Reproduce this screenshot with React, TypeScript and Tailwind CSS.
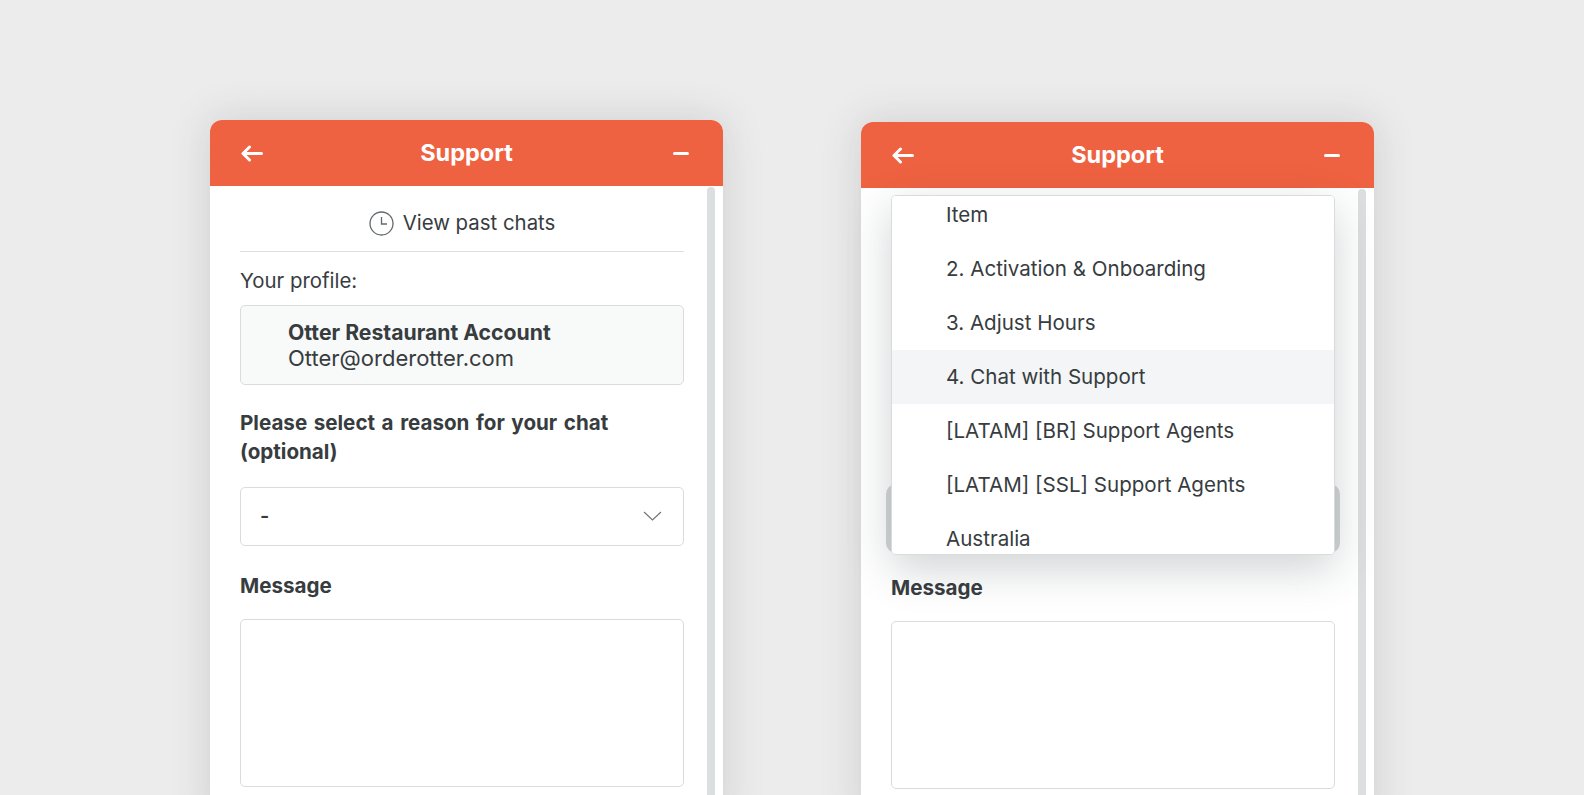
const options = [
  { label: 'Item' },
  { label: '2. Activation & Onboarding' },
  { label: '3. Adjust Hours' },
  { label: '4. Chat with Support', active: true },
  { label: '[LATAM] [BR] Support Agents' },
  { label: '[LATAM] [SSL] Support Agents' },
  { label: 'Australia' },
];

function ReasonMenu() {
  return (
    <div className="absolute left-[30px] top-[73px] z-10 h-[360px] w-[444px] overflow-hidden rounded-[5px] border border-[#d9dcdd] bg-white shadow-[0_14px_44px_rgba(60,70,75,0.24)]">
      <div className="-mt-[8px]">
        {options.map((option) => (
          <div
            key={option.label}
            className={`flex h-[54px] items-center pl-[54px] text-[20.55px] ${option.active ? 'bg-[#f3f5f6]' : 'bg-white'}`}
          >
            {option.label}
          </div>
        ))}
      </div>
    </div>
  );
}

function SupportPanel({ menuOpen = false, className = '' }: { menuOpen?: boolean; className?: string }) {
  return (
    <section className={`relative w-[513px] shrink-0 self-start rounded-t-[12px] bg-white text-[#373c3f] shadow-[0_0_40px_rgba(60,60,60,0.17)] ${className}`}>
      <header className="flex h-[66px] items-center justify-between rounded-t-[12px] bg-[#ef6241] pl-[31px] pr-[34px] text-white">
        <svg width="22" height="17" viewBox="0 0 22 17" fill="none" stroke="currentColor" strokeWidth="3" strokeLinecap="round" strokeLinejoin="round">
          <path d="M20.5 8.5H2M8.5 2 2 8.5 8.5 15" />
        </svg>
        <h2 className="mr-[3px] text-[23.5px] font-bold leading-none">Support</h2>
        <div className="h-[3px] w-[16px] rounded-full bg-white" />
      </header>

      <div className="flex pl-[30px]">
        <div className="w-[444px] shrink-0">
          {/* covered by the open menu on the right panel */}
          <div className={menuOpen ? 'invisible' : ''}>
            <div className="flex h-[66px] items-center justify-center gap-[9px] border-b border-[#dcdedf] pt-[9px] text-[20.4px]">
              <svg width="25" height="25" viewBox="0 0 25 25" fill="none" stroke="#63696c" strokeWidth="1.3">
                <circle cx="12.5" cy="12.5" r="11.5" />
                <path d="M12.5 6v7h5.5" />
              </svg>
              <span>View past chats</span>
            </div>

            <p className="mt-[15px] text-[20.4px] leading-[28px]">Your profile:</p>
            <div className="mt-[10px] flex h-[80px] flex-col justify-center rounded-[5px] border border-[#d9dcdd] bg-[#f8f9f9] pl-[47px] leading-[26px]">
              <span className="text-[21.2px] font-bold">Otter Restaurant Account</span>
              <span className="text-[22px]">Otter@orderotter.com</span>
            </div>

            <p className="mt-[24px] text-[20.6px] font-bold leading-[28.5px] [word-spacing:1.7px]">
              Please select a reason for your chat
              <br />
              (optional)
            </p>
          </div>

          <div className={`mt-[21px] flex h-[59px] items-center justify-between rounded-[5px] border border-[#d9dcdd] bg-white pb-[2px] pl-[19px] pr-[21px] text-[20px] font-semibold ${menuOpen ? 'shadow-[0_0_0_5px_#d4d6d6]' : ''}`}>
            <span className={menuOpen ? 'invisible' : ''}>-</span>
            <svg width="19" height="10" viewBox="0 0 19 10" fill="none" stroke="#70767a" strokeWidth="1.2" className={menuOpen ? 'invisible' : ''}>
              <path d="M1 1l8.5 8L18 1" />
            </svg>
          </div>

          <p className="mt-[26px] text-[20.6px] font-bold leading-[28px]">Message</p>
          <div className="mt-[19px] h-[168px] rounded-[5px] border border-[#d9dcdd] bg-white" />
          <div className="h-[40px]" />
        </div>
        <div className="ml-[23px] mt-[1px] w-[8px] shrink-0 rounded-t-full bg-[#dcdfe0]" />
      </div>

      {menuOpen && <ReasonMenu />}
    </section>
  );
}

export default function App() {
  return (
    <div className="flex h-[795px] gap-[138px] overflow-hidden bg-[#ececec] pl-[210px] pt-[120px] font-['Inter',sans-serif]">
      <SupportPanel />
      <SupportPanel menuOpen className="mt-[2px]" />
    </div>
  );
}
